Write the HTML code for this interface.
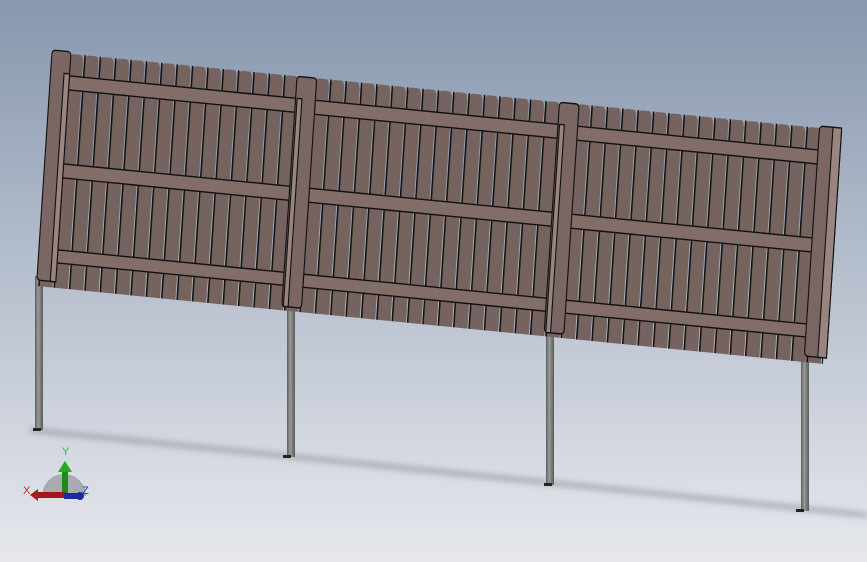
<!DOCTYPE html>
<html><head><meta charset="utf-8"><style>
html,body{margin:0;padding:0;width:867px;height:562px;overflow:hidden}
svg{display:block}
</style></head><body>
<svg width="867" height="562" viewBox="0 0 867 562" xmlns="http://www.w3.org/2000/svg">
<defs>
<linearGradient id="bg" x1="0" y1="0" x2="0" y2="1">
<stop offset="0" stop-color="#8797ae"/>
<stop offset="0.45" stop-color="#b3bccb"/>
<stop offset="1" stop-color="#e6e8ed"/>
</linearGradient>
<linearGradient id="pole" x1="0" y1="0" x2="1" y2="0">
<stop offset="0" stop-color="#5d5d5d"/>
<stop offset="0.4" stop-color="#9a9a98"/>
<stop offset="1" stop-color="#5a5a5a"/>
</linearGradient>
<filter id="bl" x="-5%" y="-200%" width="110%" height="500%"><feGaussianBlur stdDeviation="3"/></filter>
<pattern id="pk" patternUnits="userSpaceOnUse" x="2" y="0" width="19.5" height="240">
<path d="M1,8 Q1,0 6,0 L14,0 Q18.5,0 18.5,8 L18.5,240 L1,240 Z" fill="#766360"/>
<rect x="0" y="0" width="2" height="240" fill="#111"/>
</pattern>
</defs>
<rect width="867" height="562" fill="url(#bg)"/>
<!-- ground shadow -->
<path d="M30,430 L867,515" stroke="#8a909a" stroke-width="6" opacity="0.55" filter="url(#bl)"/>
<!-- poles -->
<rect x="35" y="276" width="8" height="154" fill="url(#pole)"/>
<rect x="287" y="302" width="8" height="155" fill="url(#pole)"/>
<rect x="546" y="330" width="8" height="155" fill="url(#pole)"/>
<rect x="801" y="356" width="8" height="155" fill="url(#pole)"/>
<rect x="33" y="428" width="8" height="3" fill="#222"/>
<rect x="283" y="455" width="8" height="3" fill="#222"/>
<rect x="544" y="483" width="8" height="3" fill="#222"/>
<rect x="796" y="509" width="8" height="3" fill="#222"/>
<!-- fence -->
<g transform="matrix(0.788,0.078,-0.0664,1,52,52)">
<rect x="2" y="0" width="996" height="234" fill="url(#pk)"/>
<g fill="#826d69" stroke="#111" stroke-width="1.4">
<rect x="22" y="22" width="292" height="14"/>
<rect x="22" y="110" width="292" height="14"/>
<rect x="22" y="196" width="292" height="13"/>
<rect x="336" y="22" width="310" height="14"/>
<rect x="336" y="110" width="310" height="14"/>
<rect x="336" y="196" width="310" height="13"/>
<rect x="668" y="22" width="310" height="14"/>
<rect x="668" y="110" width="310" height="14"/>
<rect x="668" y="196" width="310" height="13"/>
</g>
<g stroke="#111" stroke-width="1.4">
<rect x="0" y="-2" width="24" height="230" rx="4" fill="#7a6663"/>
<rect x="17" y="20" width="7" height="208" fill="#9a8480"/>
<rect x="311" y="0" width="25" height="230" rx="4" fill="#7a6663"/>
<rect x="313" y="22" width="6" height="208" fill="#9a8480"/>
<rect x="644" y="0" width="25" height="230" rx="4" fill="#7a6663"/>
<rect x="646" y="22" width="6" height="208" fill="#9a8480"/>
<rect x="974" y="-2" width="28" height="230" rx="4" fill="#7a6663"/>
<rect x="991" y="-2" width="11" height="230" fill="#9a8480"/>
</g>
</g>
<!-- triad -->
<path d="M42,496 A22,22 0 0 1 86,496 Z" fill="#a9abaf"/>
<rect x="62" y="470" width="6" height="28" fill="#1a8a1a"/>
<path d="M58,472 L65,461 L72,472 Z" fill="#22aa22"/>
<rect x="36" y="492" width="30" height="6" fill="#a01818"/>
<path d="M38,489 L30,495 L38,501 Z" fill="#b01c1c"/>
<rect x="64" y="493" width="16" height="6" fill="#1a2aa0"/>
<circle cx="80" cy="496" r="4" fill="#1a2aa0"/>
<text x="62" y="455" font-family="Liberation Sans, sans-serif" font-size="11" fill="#22cc22">Y</text>
<text x="23" y="494" font-family="Liberation Sans, sans-serif" font-size="11" fill="#dd2222">X</text>
<text x="82" y="494" font-family="Liberation Sans, sans-serif" font-size="11" fill="#2233dd">Z</text>
</svg>
</body></html>
